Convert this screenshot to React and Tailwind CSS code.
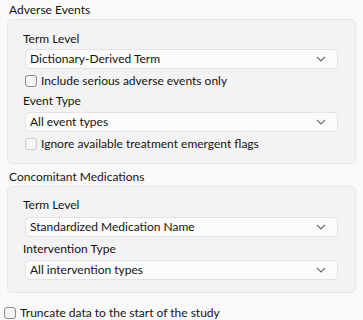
import React from 'react';

const font = { fontFamily: 'Lato, "Noto Sans", sans-serif' };

const Chevron = () => (
    <svg width="10" height="6" viewBox="0 0 10 6" className="shrink-0">
        <path d="M1 1 L5 5 L9 1" fill="none" stroke="#6b6b6b" strokeWidth="1.1" />
    </svg>
);

const Select = ({ value }) => (
    <div className="mx-[2px] h-[20px] flex items-center justify-between rounded-[4px] border border-[#e3e3e3] bg-[#fbfbfb] pl-[4px] pr-[11px]">
        <span>{value}</span>
        <Chevron />
    </div>
);

const Check = ({ label, disabled }) => (
    <div className="mx-[2px] h-[16px] flex items-center gap-[4px]">
        <span className={`w-[12px] h-[12px] rounded-[3px] border bg-[#f6f6f6] ${disabled ? 'border-[#c9c9c9]' : 'border-[#8c8c8c]'}`}></span>
        <span>{label}</span>
    </div>
);

const Label = ({ children, className = '' }) => (
    <div className={`h-[16px] leading-[16px] ${className}`}>{children}</div>
);

const Group = ({ title, children }) => (
    <div>
        <div className="h-[19px] pl-[9px] leading-[19px]">{title}</div>
        <div className="mx-[7px] rounded-[5px] border border-[#e6e6e6] bg-[#f3f3f3] pl-[15px] pr-[15px]">
            {children}
        </div>
    </div>
);

export default function App() {
    return (
        <div className="w-[363px] h-[320px] bg-[#f9f9f9] text-[12px] text-[#141414]" style={font}>
            <Group title="Adverse Events">
                <div className="pt-[11px] pb-[11px]">
                    <Label>Term Level</Label>
                    <div className="mt-[2px]"><Select value="Dictionary-Derived Term" /></div>
                    <div className="mt-[4px]"><Check label="Include serious adverse events only" /></div>
                    <Label className="mt-[4px]">Event Type</Label>
                    <div className="mt-[3px]"><Select value="All event types" /></div>
                    <div className="mt-[4px]"><Check label="Ignore available treatment emergent flags" disabled /></div>
                </div>
            </Group>
            <div className="mt-[3px]">
                <Group title="Concomitant Medications">
                    <div className="pt-[10px] pb-[12px]">
                        <Label>Term Level</Label>
                        <div className="mt-[4px]"><Select value="Standardized Medication Name" /></div>
                        <Label className="mt-[4px]">Intervention Type</Label>
                        <div className="mt-[3px]"><Select value="All intervention types" /></div>
                    </div>
                </Group>
            </div>
            <div className="mt-[12px] h-[16px] pl-[4px] flex items-center gap-[4px]">
                <span className="w-[12px] h-[12px] rounded-[3px] border border-[#8c8c8c] bg-[#f6f6f6]"></span>
                <span>Truncate data to the start of the study</span>
            </div>
        </div>
    );
}
